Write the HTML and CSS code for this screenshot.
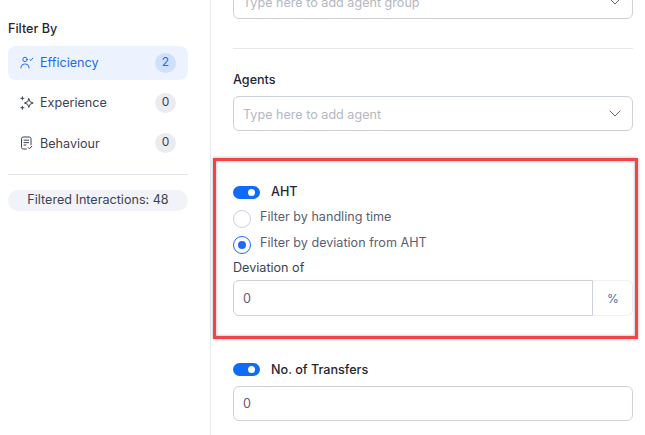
FILE: index.html
```html
<!DOCTYPE html>
<html lang="en">
<head>
    <meta charset="UTF-8">
    <meta name="viewport" content="width=device-width, initial-scale=1.0">
    <title>Filter By</title>
    <link rel="stylesheet" href="styles.css">
</head>
<body>
    <aside class="sidebar">
        <h3 class="sidebar-title">Filter By</h3>
        <ul class="filter-list">
            <li class="filter-item active">
                <svg class="filter-icon" viewBox="0 0 14 14" fill="none" stroke="currentColor" stroke-width="1" stroke-linecap="round" stroke-linejoin="round">
                    <circle cx="5" cy="3.4" r="2.2"/>
                    <path d="M1 12v-1a3.6 3.6 0 0 1 3.6-3h.8a3.6 3.6 0 0 1 3.6 3v1"/>
                    <path d="M9.8 3.6l1 .9 2-2.3"/>
                </svg>
                <span class="filter-name">Efficiency</span>
                <span class="count">2</span>
            </li>
            <li class="filter-item">
                <svg class="filter-icon" viewBox="0 0 14 14" fill="none" stroke="currentColor" stroke-width="1" stroke-linecap="round" stroke-linejoin="round">
                    <path d="M8.8 2.6l1.2 3.1 3.2 1.3-3.2 1.3-1.2 3.1-1.2-3.1L4.4 7l3.2-1.3z"/>
                    <path d="M2.4 .8v3M.9 2.3h3"/>
                    <path d="M2.4 10.2v3M.9 11.7h3"/>
                </svg>
                <span class="filter-name">Experience</span>
                <span class="count">0</span>
            </li>
            <li class="filter-item">
                <svg class="filter-icon" viewBox="0 0 14 14" fill="none" stroke="currentColor" stroke-width="1" stroke-linecap="round" stroke-linejoin="round">
                    <path d="M6.4 13H3.2A1.7 1.7 0 0 1 1.5 11.3V2.7A1.7 1.7 0 0 1 3.2 1h6.1A1.7 1.7 0 0 1 11 2.7v6"/>
                    <path d="M4 4.2h4.6M4 6.6h4.6M4 9h2"/>
                    <path d="M8.2 11.6l1.2 1.2 2.4-2.6"/>
                </svg>
                <span class="filter-name">Behaviour</span>
                <span class="count">0</span>
            </li>
        </ul>
        <div class="sidebar-rule"></div>
        <div class="filtered-pill">Filtered Interactions: 48</div>
    </aside>

    <main class="content">
        <div class="select first-select">
            <span class="placeholder">Type here to add agent group</span>
            <svg class="chevron" viewBox="0 0 12 7" fill="none" stroke="currentColor" stroke-width="1" stroke-linecap="round" stroke-linejoin="round"><path d="M1 1l5 5 5-5"/></svg>
        </div>
        <div class="content-rule"></div>

        <label class="field-label">Agents</label>
        <div class="select">
            <span class="placeholder">Type here to add agent</span>
            <svg class="chevron" viewBox="0 0 12 7" fill="none" stroke="currentColor" stroke-width="1" stroke-linecap="round" stroke-linejoin="round"><path d="M1 1l5 5 5-5"/></svg>
        </div>

        <section class="aht">
            <div class="toggle-row">
                <span class="toggle"></span>
                <span class="toggle-label">AHT</span>
            </div>
            <div class="radio-row">
                <span class="radio"></span>
                <span class="radio-text">Filter by handling time</span>
            </div>
            <div class="radio-row">
                <span class="radio checked"></span>
                <span class="radio-text">Filter by deviation from AHT</span>
            </div>
            <div class="deviation-label">Deviation of</div>
            <div class="input-group">
                <span class="input-value">0</span>
                <span class="addon">%</span>
            </div>
        </section>

        <section class="transfers">
            <div class="toggle-row">
                <span class="toggle"></span>
                <span class="toggle-label">No. of Transfers</span>
            </div>
            <div class="number-input">
                <span class="input-value">0</span>
            </div>
        </section>
    </main>

    <div class="highlight-box"></div>
</body>
</html>
```

FILE: styles.css
```css
* {
    box-sizing: border-box;
}
html, body {
    height: 100%;
}
body {
    margin: 0;
    display: flex;
    overflow: hidden;
    position: relative;
    font-family: Inter, 'Liberation Sans', sans-serif;
    font-size: 12.6px;
    color: #1f2533;
    background-color: #fff;
}
.sidebar {
    width: 211px;
    flex-shrink: 0;
    padding: 21px 22px 0 8px;
    border-right: 1px solid #e9ebf0;
}
.sidebar-title {
    margin: 0 0 9px;
    font-size: 12.6px;
    line-height: 16px;
    font-weight: 500;
}
.filter-list {
    list-style-type: none;
    margin: 0;
    padding: 0;
}
.filter-item {
    height: 34px;
    margin-bottom: 6px;
    padding: 0 12px;
    display: flex;
    align-items: center;
    border-radius: 8px;
    color: #3c4354;
}
.filter-item.active {
    background-color: #edf3fe;
    color: #1f6bf0;
}
.filter-icon {
    width: 14px;
    height: 14px;
    margin-right: 6px;
    flex-shrink: 0;
}
.filter-name {
    flex: 1;
    padding-bottom: 1px;
}
.filter-item:last-child .filter-name {
    padding: 1px 0 0;
}
.count {
    width: 21px;
    height: 20px;
    border-radius: 10px;
    background-color: #ebecf0;
    font-size: 12px;
    line-height: 18px;
    text-align: center;
}
.active .count {
    background-color: #cfe0fc;
}
.sidebar-rule {
    height: 1px;
    margin-top: 14px;
    background-color: #e3e5ea;
}
.filtered-pill {
    height: 21px;
    margin-top: 15px;
    border-radius: 11px;
    background-color: #f1f3f8;
    color: #3c4354;
    line-height: 20px;
    text-align: center;
}
.content {
    flex: 1;
    padding: 0 12px 0 22px;
}
.select, .number-input {
    height: 35px;
    padding: 0 9px;
    display: flex;
    align-items: center;
    justify-content: space-between;
    border: 1px solid #cdd1dc;
    border-radius: 6px;
}
.first-select {
    margin-top: -16px;
}
.placeholder {
    padding-top: 2px;
    color: #b4b8c4;
}
.chevron {
    width: 12px;
    height: 7px;
    margin-right: 2px;
    color: #5c6270;
}
.content-rule {
    height: 1px;
    margin-top: 29px;
    background-color: #e6e8ec;
}
.field-label {
    display: block;
    margin: 23px 0 8px;
    font-size: 12.6px;
    line-height: 16px;
    font-weight: 500;
}
.aht {
    padding-top: 54px;
}
.toggle-row {
    height: 14px;
    display: flex;
    align-items: center;
}
.toggle {
    width: 27px;
    height: 13px;
    border-radius: 7px;
    background-color: #0f6bfa;
    position: relative;
    flex-shrink: 0;
}
.toggle::after {
    content: "";
    position: absolute;
    top: 3px;
    right: 5px;
    width: 7px;
    height: 7px;
    border-radius: 50%;
    background-color: #fff;
}
.toggle-label {
    margin-left: 11px;
    padding-bottom: 2px;
    font-weight: 500;
}
.radio-row {
    height: 26px;
    display: flex;
    align-items: center;
    color: #5a6072;
}
.aht .toggle-row + .radio-row {
    margin-top: 6px;
}
.radio {
    width: 18px;
    height: 18px;
    margin: 1px 9px 0 0;
    border: 1px solid #cdd1dc;
    border-radius: 50%;
    position: relative;
    flex-shrink: 0;
}
.radio-text {
    padding-bottom: 3px;
}
.radio.checked {
    border-color: #1f6bf0;
}
.radio.checked::after {
    content: "";
    position: absolute;
    top: 4px;
    left: 4px;
    width: 8px;
    height: 8px;
    border-radius: 50%;
    background-color: #1f6bf0;
}
.deviation-label {
    margin-top: 3px;
    line-height: 16px;
    color: #3c4354;
}
.input-group {
    height: 36px;
    margin-top: 4px;
    display: flex;
}
.input-group .input-value {
    flex: 1;
    padding-left: 9px;
    line-height: 34px;
    padding-top: 1px;
    border: 1px solid #cdd1dc;
    border-radius: 6px 0 0 6px;
}
.input-value {
    color: #5a6072;
}
.addon {
    width: 40px;
    padding: 1px 0 0 1px;
    text-align: center;
    line-height: 34px;
    font-size: 12px;
    color: #3f6fa8;
    border: 1px solid #eef0f3;
    border-left: none;
    border-radius: 0 6px 6px 0;
}
.transfers {
    padding-top: 46px;
}
.transfers .toggle-label {
    padding-bottom: 0;
}
.number-input {
    margin-top: 10px;
}
.highlight-box {
    position: absolute;
    left: 213px;
    top: 158px;
    width: 425px;
    height: 181px;
    border: 3px solid #f24545;
    box-shadow: 0 0 3px rgba(0, 0, 0, 0.3), inset 0 0 3px rgba(0, 0, 0, 0.35);
}
```
